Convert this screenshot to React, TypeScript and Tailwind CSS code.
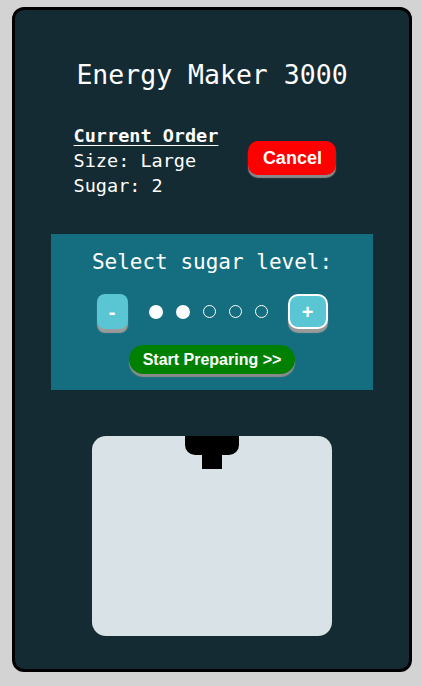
const mono = { fontFamily: '"DejaVu Sans Mono", "Liberation Mono", monospace' }

function SugarDots({ level, max = 5 }: { level: number; max?: number }) {
  return (
    <div className="flex items-center gap-[13px]">
      {Array.from({ length: max }).map((_, i) =>
        i < level ? (
          <div key={i} className="w-[14px] h-[14px] rounded-full bg-white" />
        ) : (
          <div key={i} className="w-[13px] h-[13px] rounded-full border border-white" />
        )
      )}
    </div>
  )
}

export default function App() {
  const sugar = 2

  return (
    <div className="min-h-[686px] bg-[#d3d3d3] pt-[7px] pl-[12px] font-['Liberation_Sans',Arial,sans-serif]">
      <div className="w-[400px] h-[665px] bg-[#152b34] border-[3px] border-black rounded-[12px] flex flex-col items-center">
        <h1 className="mt-[50px] text-[26.5px] leading-[30px] text-white" style={mono}>
          Energy Maker 3000
        </h1>

        <div className="mt-[33px] flex items-center gap-[30px] pr-[14px]">
          <div className="text-[18.5px] leading-[25px] text-white" style={mono}>
            <div className="font-bold underline underline-offset-[3px]">Current Order</div>
            <div>Size: Large</div>
            <div>Sugar: {sugar}</div>
          </div>
          <button className="w-[88px] h-[34px] mb-[5px] rounded-[10px] bg-[#ff0000] text-white text-[18px] font-bold shadow-[0_3px_1px_#8a8a8a]">
            Cancel
          </button>
        </div>

        <div className="mt-[36px] w-[322px] h-[156px] bg-[#146e80] flex flex-col items-center pt-[16px]">
          <div className="text-[21px] leading-[25px] text-white" style={mono}>
            Select sugar level:
          </div>
          <div className="mt-[19px] flex items-center">
            <button className="w-[31px] h-[35px] rounded-[8px] bg-[#5bc6d3] text-white text-[20px] font-bold leading-none shadow-[0_4px_1px_#9a9a9a]">
              -
            </button>
            <div className="ml-[21px] mr-[20px]">
              <SugarDots level={sugar} />
            </div>
            <button className="w-[40px] h-[35px] rounded-[10px] bg-[#5bc6d3] border-2 border-white text-white text-[20px] font-bold leading-none shadow-[0_4px_1px_#9a9a9a]">
              +
            </button>
          </div>
          <button className="mt-[16px] w-[166px] h-[29px] rounded-full bg-[#008000] text-white text-[16px] font-bold shadow-[0_3px_1px_#8a8a8a]">
            Start Preparing &gt;&gt;
          </button>
        </div>

        <div className="mt-[46px] w-[240px] h-[200px] bg-[#d8e2e7] rounded-[14px] flex flex-col items-center">
          <div className="w-[54px] h-[19px] bg-black rounded-b-[10px]" />
          <div className="w-[20px] h-[14px] bg-black" />
        </div>
      </div>
    </div>
  )
}
